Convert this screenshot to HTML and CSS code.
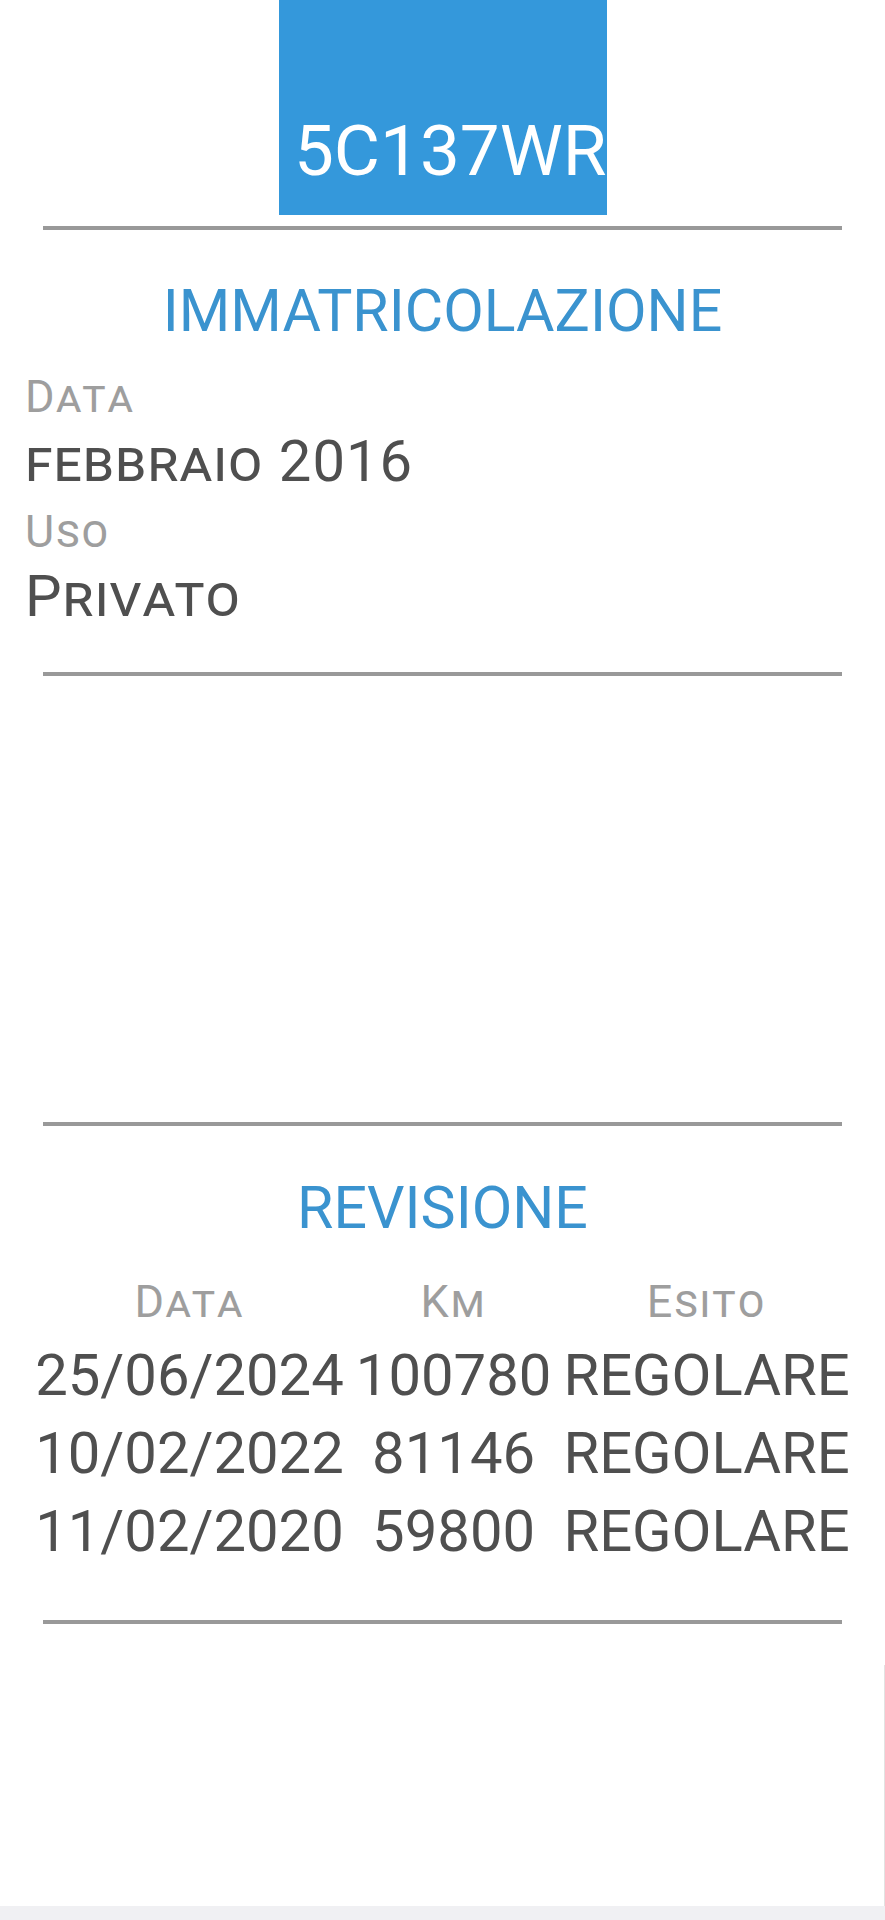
FILE: index.html
```html
<!DOCTYPE html>
<html>
<head>
    <title>Dettaglio veicolo</title>
    <link rel="stylesheet" href="styles.css">
</head>
<body>
    <div class="plate">
        <span class="plate-number">5C137WR</span>
    </div>

    <div class="divider"></div>

    <section class="section">
        <h2 class="section-title">Immatricolazione</h2>
        <div class="field">
            <div class="label">Data</div>
            <div class="value">febbraio 2016</div>
        </div>
        <div class="field">
            <div class="label">Uso</div>
            <div class="value">Privato</div>
        </div>
    </section>

    <div class="divider"></div>

    <!-- Empty block between the two sections -->
    <section class="section section-empty"></section>

    <div class="divider"></div>

    <section class="section section-table">
        <h2 class="section-title">Revisione</h2>
        <div class="revisions">
            <div class="label">Data</div>
            <div class="label">Km</div>
            <div class="label">Esito</div>

            <div class="cell">25/06/2024</div>
            <div class="cell">100780</div>
            <div class="cell">REGOLARE</div>

            <div class="cell">10/02/2022</div>
            <div class="cell">81146</div>
            <div class="cell">REGOLARE</div>

            <div class="cell">11/02/2020</div>
            <div class="cell">59800</div>
            <div class="cell">REGOLARE</div>
        </div>
    </section>

    <div class="divider"></div>

    <div class="page-bottom"></div>
    <div class="nav-bar"></div>
</body>
</html>
```

FILE: styles.css
```css
body {
    font-family: Roboto, "Liberation Sans", sans-serif;
    background-color: #fff;
    margin: 0;
    padding: 0;
}

.plate {
    width: 328px;
    height: 215px;
    margin: 0 auto;
    background-color: #3498db;
    display: flex;
    justify-content: flex-end;
    align-items: flex-end;
    overflow: hidden;
    box-sizing: border-box;
    padding-bottom: 29px;
}

.plate-number {
    color: #fff;
    font-size: 71px;
    line-height: 70px;
    white-space: nowrap;
}

.divider {
    height: 4px;
    margin: 0 43px;
    background-color: #999;
}

.plate + .divider {
    margin-top: 11px;
}

.section {
    padding: 46px 25px 42px 25px;
}

.section-title {
    margin: 0 0 21px 0;
    text-align: center;
    text-transform: uppercase;
    font-weight: normal;
    font-size: 59px;
    line-height: 70px;
    color: #3a93cf;
}

.label {
    font-variant: small-caps;
    font-size: 45px;
    line-height: 60px;
    letter-spacing: 2px;
    color: #9e9e9e;
}

.value {
    font-variant: small-caps;
    font-size: 58px;
    line-height: 68px;
    letter-spacing: 1px;
    color: #4f4f4f;
}

.field + .field {
    margin-top: 7px;
}

.section-empty {
    padding: 0;
    height: 446px;
}

.section-table {
    padding: 47px 0 50px 0;
}

.section-table .section-title {
    margin-bottom: 24px;
}

.revisions {
    display: grid;
    grid-template-columns: auto auto auto;
    justify-content: center;
    column-gap: 12px;
    text-align: center;
}

.revisions .label {
    line-height: 69px;
}

.cell {
    font-size: 58px;
    line-height: 78px;
    color: #4f4f4f;
    white-space: nowrap;
}

.page-bottom {
    height: 241px;
    margin-top: 41px;
    border-right: 1px solid #e2e2e2;
}

.nav-bar {
    height: 14px;
    background-color: #f0f0f3;
}
```
